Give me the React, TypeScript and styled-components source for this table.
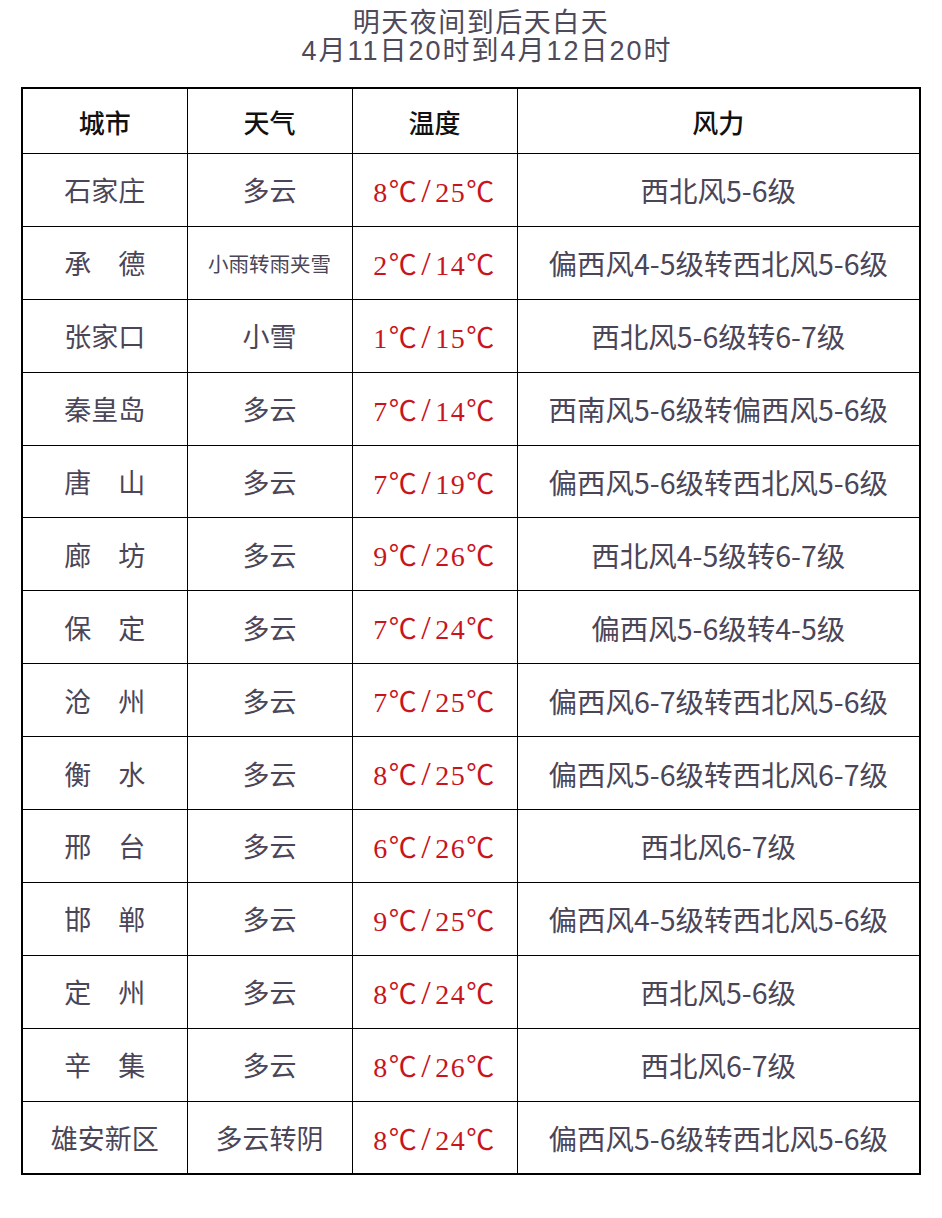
import React from "react";
import styled, { createGlobalStyle } from "styled-components";

const Global = createGlobalStyle`
  html, body { margin: 0; padding: 0; background: #ffffff; }
  body { font-family: "Noto Sans CJK SC", "Noto Sans", sans-serif; }
`;

const Page = styled.div`
  width: 942px;
  min-height: 1218px;
  background: #fff;
  display: flex;
  flex-direction: column;
  align-items: center;
`;

const Title = styled.div`
  margin-top: 9px;
  display: flex;
  flex-direction: column;
  align-items: center;
  color: #4e4a5a;
  font-family: "Liberation Sans", "Noto Sans CJK SC", sans-serif;
  font-size: 27px;
  line-height: 28px;
`;

const TitleLine = styled.div<{ $shift: number; $spacing: number }>`
  white-space: nowrap;
  margin-left: ${(p) => p.$shift}px;
  letter-spacing: ${(p) => p.$spacing}px;
`;

const Table = styled.table`
  margin-top: 22px;
  width: 900px;
  border-collapse: collapse;
  table-layout: fixed;
  border: 2px solid #000;
`;

const HeadCell = styled.th`
  height: 64px;
  border: 1.5px solid #000;
  font-weight: 500;
  font-size: 26px;
  color: #111;
  text-align: center;
  vertical-align: middle;
  padding: 0;
`;

const Cell = styled.td<{ $tone?: "red" | "plain"; $size?: number; $kind?: "temp" | "text" }>`
  height: 71.9px;
  border: 1.5px solid #000;
  text-align: center;
  vertical-align: middle;
  padding: 0;
  white-space: nowrap;
  color: ${(p) => (p.$tone === "red" ? "#c8141c" : "#4b4558")};
  font-size: ${(p) => p.$size ?? 27}px;
  font-family: ${(p) =>
    p.$kind === "temp"
      ? `"Liberation Serif", "Noto Sans CJK SC", serif`
      : `"Noto Sans CJK SC", sans-serif`};
  letter-spacing: ${(p) => (p.$kind === "temp" ? "1.5px" : "0")};
`;

const Slash = styled.span`
  font-size: 34px;
  line-height: 1;
  margin: 0 3px;
`;

const rows: [string, string, string, string, string][] = [
  ["石家庄", "多云", "8", "25", "西北风5-6级"],
  ["承　德", "小雨转雨夹雪", "2", "14", "偏西风4-5级转西北风5-6级"],
  ["张家口", "小雪", "1", "15", "西北风5-6级转6-7级"],
  ["秦皇岛", "多云", "7", "14", "西南风5-6级转偏西风5-6级"],
  ["唐　山", "多云", "7", "19", "偏西风5-6级转西北风5-6级"],
  ["廊　坊", "多云", "9", "26", "西北风4-5级转6-7级"],
  ["保　定", "多云", "7", "24", "偏西风5-6级转4-5级"],
  ["沧　州", "多云", "7", "25", "偏西风6-7级转西北风5-6级"],
  ["衡　水", "多云", "8", "25", "偏西风5-6级转西北风6-7级"],
  ["邢　台", "多云", "6", "26", "西北风6-7级"],
  ["邯　郸", "多云", "9", "25", "偏西风4-5级转西北风5-6级"],
  ["定　州", "多云", "8", "24", "西北风5-6级"],
  ["辛　集", "多云", "8", "26", "西北风6-7级"],
  ["雄安新区", "多云转阴", "8", "24", "偏西风5-6级转西北风5-6级"],
];

export default function App() {
  return (
    <Page>
      <Global />
      <Title>
        <TitleLine $shift={20} $spacing={1.5}>明天夜间到后天白天</TitleLine>
        <TitleLine $shift={32} $spacing={2}>4月11日20时到4月12日20时</TitleLine>
      </Title>
      <Table>
        <colgroup>
          <col style={{ width: 165 }} />
          <col style={{ width: 165 }} />
          <col style={{ width: 165 }} />
          <col />
        </colgroup>
        <thead>
          <tr>
            <HeadCell>城市</HeadCell>
            <HeadCell>天气</HeadCell>
            <HeadCell>温度</HeadCell>
            <HeadCell>风力</HeadCell>
          </tr>
        </thead>
        <tbody>
          {rows.map(([city, weather, lo, hi, wind]) => (
            <tr key={city}>
              <Cell>{city}</Cell>
              <Cell $size={weather.length > 4 ? 20.5 : 27}>{weather}</Cell>
              <Cell $tone="red" $kind="temp" $size={28}>
                {lo}℃<Slash>/</Slash>{hi}℃
              </Cell>
              <Cell $size={28.5}>{wind}</Cell>
            </tr>
          ))}
        </tbody>
      </Table>
    </Page>
  );
}
